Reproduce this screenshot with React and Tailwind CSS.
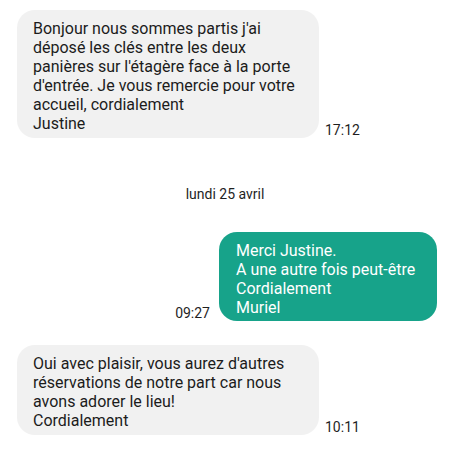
import React from 'react';

const font = { fontFamily: 'Roboto, "Noto Sans", sans-serif' };

const Incoming = ({ lines, time }) => (
    <div className="flex items-end">
        <div className="ml-[17px] w-[302px] rounded-[18px] bg-[#f1f1f1] pl-4 pr-3 pt-[9px] pb-[5px] text-[16px] leading-[19px] text-[#1c1c1c]">
            {lines.map((l, i) => (
                <div key={i}>{l}</div>
            ))}
        </div>
        <span className="ml-[6px] text-[14px] leading-[16px] text-[#1f1f1f]">{time}</span>
    </div>
);

export default function App() {
    return (
        <div className="w-[450px] h-[450px] bg-white overflow-hidden" style={font}>
            <div className="pt-[10px]">
                <Incoming
                    time="17:12"
                    lines={[
                        "Bonjour nous sommes partis j'ai",
                        "déposé les clés entre les deux",
                        "panières sur l'étagère face à la porte",
                        "d'entrée. Je vous remercie pour votre",
                        "accueil, cordialement",
                        'Justine',
                    ]}
                />
            </div>

            {/* Date separator */}
            <div className="mt-[48px] text-center text-[14px] leading-[16px] text-[#1f1f1f]">lundi 25 avril</div>

            {/* Outgoing */}
            <div className="mt-[30px] flex items-end justify-end pr-[13px]">
                <span className="mr-[9px] text-[14px] leading-[16px] text-[#1f1f1f]">09:27</span>
                <div className="w-[218px] rounded-[18px] bg-[#17a38a] pl-[17px] pr-3 pt-[9px] pb-[4px] text-[16px] leading-[19px] text-white">
                    <div>Merci Justine.</div>
                    <div>A une autre fois peut-être</div>
                    <div>Cordialement</div>
                    <div>Muriel</div>
                </div>
            </div>

            <div className="mt-[24px]">
                <Incoming
                    time="10:11"
                    lines={[
                        "Oui avec plaisir, vous aurez d'autres",
                        'réservations de notre part car nous',
                        'avons adorer le lieu!',
                        'Cordialement',
                    ]}
                />
            </div>
        </div>
    );
}
